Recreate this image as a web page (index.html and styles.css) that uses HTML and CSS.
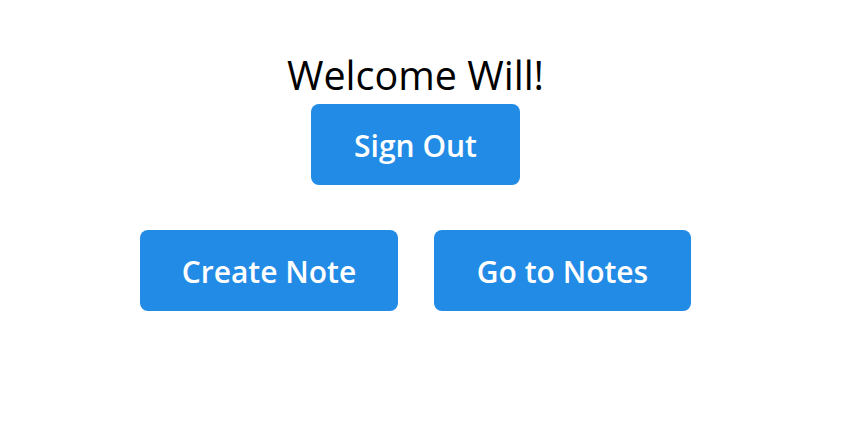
FILE: index.html
```html
<!DOCTYPE html>
<html>
<head>
<meta charset="utf-8">
<link rel="stylesheet" href="styles.css">
</head>
<body>
<main class="page">
  <h1 class="welcome">Welcome Will!</h1>
  <button class="btn">Sign Out</button>
  <div class="actions">
    <button class="btn btn-wide">Create Note</button>
    <button class="btn btn-wide">Go to Notes</button>
  </div>
</main>
</body>
</html>
```
FILE: styles.css
```css
html, body {
  margin: 0;
  background: #ffffff;
}
.page {
  width: 831px;
  display: flex;
  flex-direction: column;
  align-items: center;
  padding-top: 48px;
  font-family: "Open Sans", "Noto Sans", sans-serif;
}
.welcome {
  margin: 0 0 2px;
  font-size: 39.5px;
  font-weight: 400;
  line-height: 54px;
  color: #000;
}
.btn {
  font-family: inherit;
  background: #228be6;
  color: #fff;
  border: none;
  border-radius: 8px;
  font-size: 30px;
  font-weight: 600;
  width: 209px;
  height: 81px;
  padding: 2px 0 0;
}
.actions {
  display: flex;
  gap: 36px;
  margin-top: 45px;
}
.btn-wide {
  width: 258px;
}
.btn-wide + .btn-wide {
  width: 257px;
}
```
